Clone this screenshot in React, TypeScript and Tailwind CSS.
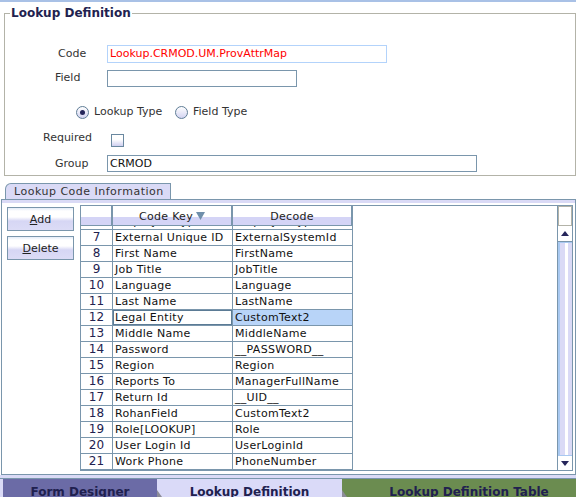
import React from "react";

const rows: [string, string, string][] = [
  ["6", "Employee Type", "EmployeeType"],
  ["7", "External Unique ID", "ExternalSystemId"],
  ["8", "First Name", "FirstName"],
  ["9", "Job Title", "JobTitle"],
  ["10", "Language", "Language"],
  ["11", "Last Name", "LastName"],
  ["12", "Legal Entity", "CustomText2"],
  ["13", "Middle Name", "MiddleName"],
  ["14", "Password", "__PASSWORD__"],
  ["15", "Region", "Region"],
  ["16", "Reports To", "ManagerFullName"],
  ["17", "Return Id", "__UID__"],
  ["18", "RohanField", "CustomText2"],
  ["19", "Role[LOOKUP]", "Role"],
  ["20", "User Login Id", "UserLoginId"],
  ["21", "Work Phone", "PhoneNumber"],
];

function Radio({ checked }: { checked?: boolean }) {
  return (
    <span className="w-[13px] h-[13px] rounded-full border border-[#5f7d96] bg-[linear-gradient(#ffffff,#d3d3f1)] flex items-center justify-center shrink-0">
      {checked && <span className="w-[5px] h-[5px] rounded-full bg-[#25255a]" />}
    </span>
  );
}

function OceanButton({ label }: { label: React.ReactNode }) {
  return (
    <button className="w-[67px] h-[24px] border border-[#7a96ac] bg-[linear-gradient(to_bottom,#e4ecf8_0px,#ffffff_3px,#ffffff_9px,#d6d6f4_13px,#dcdcf6_100%)] text-[11px] text-[#222] flex items-center justify-center leading-none">
      {label}
    </button>
  );
}

function Corner() {
  return (
    <svg className="absolute left-0 bottom-0" width="5" height="7" viewBox="0 0 5 7">
      <polygon points="0,0 5,7 0,7" fill="#8c8c98" />
    </svg>
  );
}

export default function App() {
  return (
    <div className="w-[576px] h-[497px] bg-white overflow-hidden font-['DejaVu_Sans',sans-serif] text-[11px] text-[#333]">
      <div className="h-[2px] bg-[#a9c1e6]" />

      <fieldset className="mt-[4px] ml-[4px] w-[572px] border border-[#b3b3a8] pb-[3px]">
        <legend className="ml-[5px] px-[1px] text-[12px] leading-[14px] font-bold text-[#22224f]">
          Lookup Definition
        </legend>

        <div className="flex items-start mt-[25px]">
          <div className="w-[102px] pl-[53px] leading-[17px] shrink-0">Code</div>
          <div className="w-[280px] h-[18px] border border-[#b3d3fb] pl-[2px] text-[#ff0000] leading-[16px]">
            Lookup.CRMOD.UM.ProvAttrMap
          </div>
        </div>

        <div className="flex items-start mt-[7px]">
          <div className="w-[102px] pl-[50px] leading-[16px] shrink-0">Field</div>
          <div className="w-[190px] h-[17px] border border-[#7a96ac]" />
        </div>

        <div className="flex items-center h-[14px] mt-[18px] pl-[71px]">
          <div className="w-[99px] flex items-center gap-[5px]">
            <Radio checked />
            <span>Lookup Type</span>
          </div>
          <div className="flex items-center gap-[5px]">
            <Radio />
            <span>Field Type</span>
          </div>
        </div>

        <div className="flex items-start mt-[11px]">
          <div className="w-[102px] pl-[38px] leading-[16px] shrink-0">Required</div>
          <div className="ml-[4px] mt-[4px] w-[13px] h-[13px] border border-[#6a88a0] bg-[linear-gradient(#ffffff_0,#ffffff_40%,#cfcff0_100%)]" />
        </div>

        <div className="flex items-start mt-[8px]">
          <div className="w-[102px] pl-[50px] leading-[17px] shrink-0">Group</div>
          <div className="w-[370px] h-[17px] border border-[#7a96ac] pl-[2px] leading-[15px] text-[#111]">CRMOD</div>
        </div>
      </fieldset>

      <div className="mt-[7px] ml-[5px] w-[166px] h-[16px] border-t border-l border-r border-[#7a96ac] rounded-tl-[6px] bg-[#dadaf6] pl-[8px] leading-[15px] tracking-[0.5px] text-[#333]">
        Lookup Code Information
      </div>

      <div className="ml-[1px] w-[575px] h-[276px] border border-[#7a96ac] flex flex-col">
        <div className="h-[3px] bg-[#dadaf6]" />
        <div className="flex items-start">
          <div className="ml-[5px] mt-[4px] w-[67px] flex flex-col gap-[5px]">
            <OceanButton label={<><span className="underline">A</span>dd</>} />
            <OceanButton label={<><span className="underline">D</span>elete</>} />
          </div>

          <div className="ml-[6px] mt-[2px] w-[493px] h-[266px] border border-[#7a96ac] flex">
            <div className="w-[476px] h-full overflow-hidden flex flex-col">
              <div className="flex h-[20px] shrink-0 text-[#222]">
                <div className="w-[32px] border-r-2 border-b border-[#7a96ac] bg-[linear-gradient(#ffffff_0,#ffffff_11px,#d4d4f6_11px)]" />
                <div className="w-[120px] border-r-2 border-b border-[#7a96ac] bg-[linear-gradient(#ffffff_0,#ffffff_11px,#d4d4f6_11px)] flex items-center justify-center gap-[3px] tracking-[0.3px] leading-none pt-[1px]">
                  <span>Code Key</span>
                  <svg width="9" height="8" viewBox="0 0 9 8">
                    <polygon points="0,0 9,0 4.5,8" fill="#6f8fab" />
                  </svg>
                </div>
                <div className="w-[120px] border-r-2 border-b border-[#7a96ac] bg-[linear-gradient(#ffffff_0,#ffffff_11px,#d4d4f6_11px)] flex items-center justify-center tracking-[0.3px] leading-none pt-[1px]">
                  Decode
                </div>
              </div>
              <div className="overflow-hidden flex-1">
                <div className="-mt-[12px]">
                  {rows.map(([n, key, dec]) => {
                    const sel = n === "12";
                    return (
                      <div key={n} className="flex h-[16px] w-[272px]">
                        <div className="w-[32px] border-r border-b border-[#7a96ac] text-center text-[12px] leading-[15px] text-[#22224f]">
                          {n}
                        </div>
                        <div
                          className={`w-[120px] border-r border-b border-[#7a96ac] pl-[2px] leading-[15px] tracking-[0.3px] text-[#111] whitespace-nowrap overflow-hidden ${
                            sel ? "shadow-[inset_0_0_0_1px_#5b7b95]" : ""
                          }`}
                        >
                          {key}
                        </div>
                        <div
                          className={`w-[120px] border-r border-b border-[#7a96ac] pl-[2px] leading-[15px] tracking-[0.3px] text-[#111] whitespace-nowrap overflow-hidden ${
                            sel ? "bg-[#b8d4f8]" : ""
                          }`}
                        >
                          {dec}
                        </div>
                      </div>
                    );
                  })}
                </div>
              </div>
            </div>

            <div className="w-[15px] h-full border-l border-[#7a96ac] flex flex-col">
              <div className="h-[20px] border border-[#b3b3a8] bg-white shrink-0" />
              <div className="h-[16px] border-b border-[#7a96ac] bg-white flex items-center justify-center shrink-0">
                <svg width="8" height="5" viewBox="0 0 8 5">
                  <polygon points="4,0 8,5 0,5" fill="#25255a" />
                </svg>
              </div>
              <div className="flex-1 border-l-2 border-t border-b border-[#a9c9f1] bg-[linear-gradient(to_right,#dadaf6_0,#dadaf6_5px,#ffffff_5px,#ffffff_8px,#dadaf6_8px)]" />
              <div className="h-[14px] bg-white flex items-center justify-center shrink-0">
                <svg width="8" height="5" viewBox="0 0 8 5">
                  <polygon points="0,0 8,0 4,5" fill="#25255a" />
                </svg>
              </div>
            </div>
          </div>
        </div>
      </div>

      <div className="h-[3px] bg-[#dadaf6]" />
      <div className="h-[1px] bg-[#7a96ac]" />
      <div className="flex h-[18px] text-[12px] font-bold text-[#20204f] leading-[14px]">
        <div className="w-[3px] bg-[#dadaf6]" />
        <div className="w-[154px] bg-[#6b6ba6] text-center pt-[6px]">Form Designer</div>
        <div className="relative w-[185px] bg-[#dadaf8] text-center pt-[6px]">
          <Corner />
          Lookup Definition
        </div>
        <div className="relative flex-1 bg-[#6b8c50] text-center pt-[6px] pl-[20px]">
          <Corner />
          Lookup Definition Table
        </div>
      </div>
    </div>
  );
}
